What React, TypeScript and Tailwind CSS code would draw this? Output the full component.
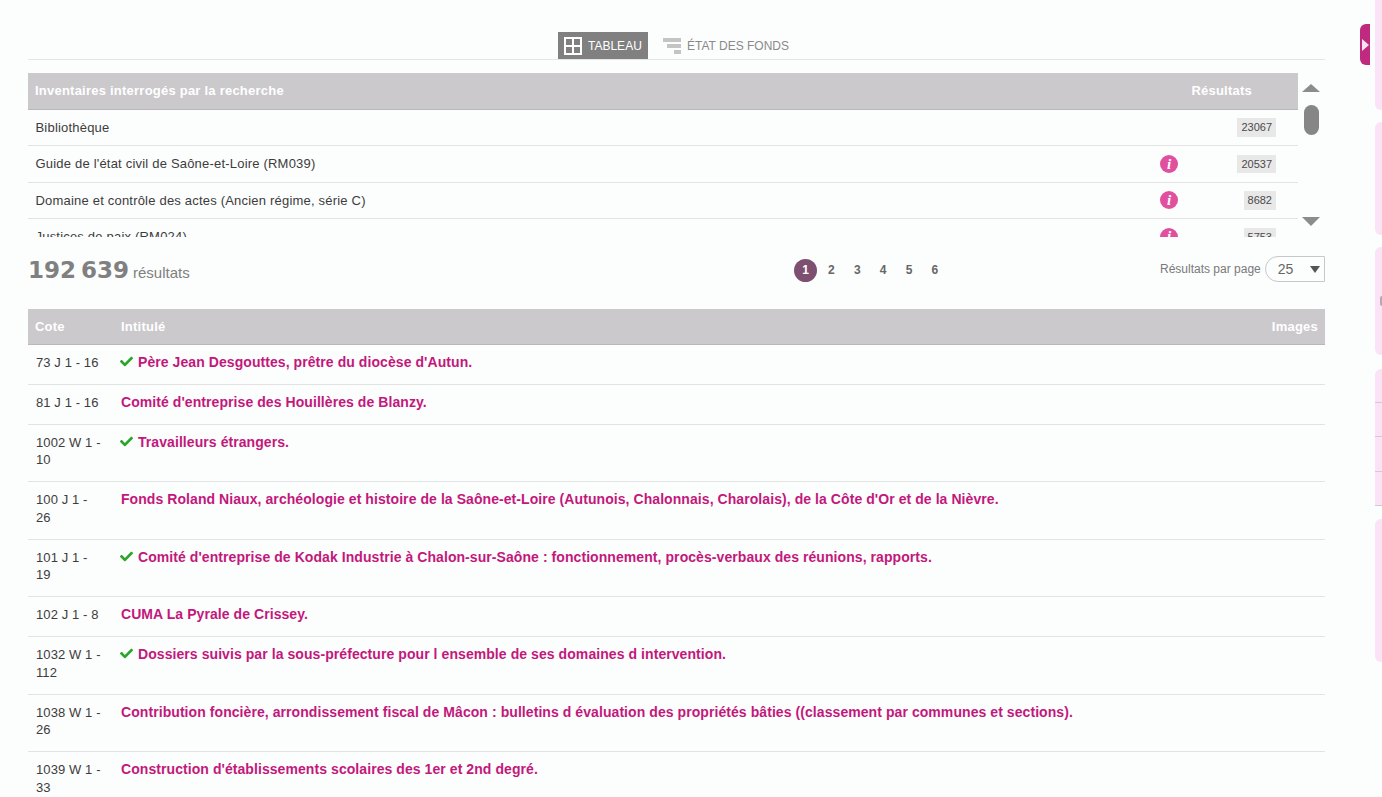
import { FaCheck } from 'react-icons/fa'

const inventories = [
  { name: 'Bibliothèque', count: '23067', info: false },
  { name: "Guide de l'état civil de Saône-et-Loire (RM039)", count: '20537', info: true },
  { name: 'Domaine et contrôle des actes (Ancien régime, série C)', count: '8682', info: true },
  { name: 'Justices de paix (RM024)', count: '5753', info: true },
]

const rows = [
  { cote: '73 J 1 - 16', title: "Père Jean Desgouttes, prêtre du diocèse d'Autun.", ok: true },
  { cote: '81 J 1 - 16', title: "Comité d'entreprise des Houillères de Blanzy.", ok: false },
  { cote: '1002 W 1 - 10', title: 'Travailleurs étrangers.', ok: true },
  {
    cote: '100 J 1 - 26',
    title:
      "Fonds Roland Niaux, archéologie et histoire de la Saône-et-Loire (Autunois, Chalonnais, Charolais), de la Côte d'Or et de la Nièvre.",
    ok: false,
  },
  {
    cote: '101 J 1 - 19',
    title:
      "Comité d'entreprise de Kodak Industrie à Chalon-sur-Saône : fonctionnement, procès-verbaux des réunions, rapports.",
    ok: true,
  },
  { cote: '102 J 1 - 8', title: 'CUMA La Pyrale de Crissey.', ok: false },
  {
    cote: '1032 W 1 - 112',
    title: 'Dossiers suivis par la sous-préfecture pour l ensemble de ses domaines d intervention.',
    ok: true,
  },
  {
    cote: '1038 W 1 - 26',
    title:
      'Contribution foncière, arrondissement fiscal de Mâcon : bulletins d évaluation des propriétés bâties ((classement par communes et sections).',
    ok: false,
  },
  { cote: '1039 W 1 - 33', title: "Construction d'établissements scolaires des 1er et 2nd degré.", ok: false },
]

function InfoIcon() {
  return (
    <span className="flex h-[18px] w-[18px] items-center justify-center rounded-full bg-[#e0509f] font-['Liberation_Serif',serif] text-[15px] font-bold italic leading-none text-white">
      i
    </span>
  )
}

function SidePanels() {
  return (
    <aside className="flex w-[7px] shrink-0 flex-col">
      <div className="h-[110px] rounded-bl-md bg-[#fae3f6]" />
      <div className="mt-[12px] h-[113px] rounded-l-md bg-[#fae3f6]" />
      <div className="mt-[12px] flex h-[108px] items-center justify-end rounded-l-md bg-[#fae3f6]">
        <span className="h-[10px] w-[2px] rounded-l-full bg-[#b5a9b2]" />
      </div>
      <div className="mt-[14px] h-[34px] rounded-tl-md border-b border-[#d9c7d5] bg-[#fae3f6]" />
      <div className="h-[34px] border-b border-[#d9c7d5] bg-[#fae3f6]" />
      <div className="h-[35px] border-b border-[#d9c7d5] bg-[#fae3f6]" />
      <div className="h-[34px] border-b border-[#d9c7d5] bg-[#fae3f6]" />
      <div className="mt-[13px] h-[143px] rounded-l-md bg-[#fae3f6]" />
    </aside>
  )
}

export default function App() {
  return (
    <div className="flex h-[797px] w-full overflow-hidden bg-[#fcfdfd] font-['Liberation_Sans',Arial,sans-serif]">
      <main className="ml-[28px] w-[1297px] shrink-0">
        <div className="mt-[32px] flex h-[28px] justify-center border-b border-[#e6e6e6] pr-[5px]">
          <div className="flex h-[27px] w-[90px] items-center bg-[#808080] pl-[6px] text-[12px] text-white">
            <svg width="18" height="18" viewBox="0 0 18 18" fill="none" stroke="white" strokeWidth="2" className="mr-[6px]">
              <rect x="1" y="1" width="16" height="16" />
              <path d="M9 1v16M1 9h16" />
            </svg>
            TABLEAU
          </div>
          <div className="flex h-[27px] w-[142px] items-center pl-[15px] text-[12px] text-[#8a8a8a]">
            <svg width="18" height="16" viewBox="0 0 18 16" fill="#c4c4c4" className="mr-[6px]">
              <rect x="0" y="0" width="18" height="4" />
              <rect x="4" y="6" width="14" height="4" />
              <rect x="11" y="12" width="7" height="4" />
            </svg>
            ÉTAT DES FONDS
          </div>
        </div>

        <div className="mt-[13px] flex">
          <div className="h-[164px] w-[1270px] overflow-hidden">
            <div className="flex h-[37px] items-center justify-between border-b border-[#b9b7ba] bg-[#cbc9cc] pl-[7px] pr-[46px] text-[13px] font-bold tracking-[0.23px] text-white">
              <span>Inventaires interrogés par la recherche</span>
              <span>Résultats</span>
            </div>
            {inventories.map((inv) => (
              <div key={inv.name} className="flex h-[36.4px] items-center border-b border-[#e3e3e3] pl-[7.5px] pr-[22px] text-[13px] text-[#3c3c3c]">
                <span className="flex-1 tracking-[0.2px]">{inv.name}</span>
                {inv.info && <InfoIcon />}
                <span className="flex w-[98px] justify-end">
                  <span className="bg-[#e8e8e8] px-[4px] py-[1px] text-[11px] text-[#4a4a4a]">{inv.count}</span>
                </span>
              </div>
            ))}
          </div>
          <div className="ml-[4px] flex h-[154px] w-[18px] flex-col items-center">
            <div className="mt-[11px] h-0 w-0 border-x-[9px] border-b-[8px] border-x-transparent border-b-[#8c8c8c]" />
            <div className="mt-[13px] h-[30px] w-[15px] rounded-[8px] bg-[#868686]" />
            <div className="mt-[82px] h-0 w-0 border-x-[9px] border-t-[9px] border-x-transparent border-t-[#8c8c8c]" />
          </div>
        </div>

        <div className="mt-[18px] flex h-[28px] items-center">
          <div className="flex w-[766px] items-baseline pt-[5px] text-[#808080]">
            <span className="font-['DejaVu_Sans',sans-serif] text-[23px] font-bold leading-none [word-spacing:-3px]">192 639</span>
            <span className="ml-[4px] text-[15px]">résultats</span>
          </div>
          <div className="flex w-[366px] items-center pt-[2px] text-[12px] font-bold text-[#666666]">
            <span className="flex h-[23px] w-[23px] items-center justify-center rounded-full bg-[#7d4f70] text-white">1</span>
            {['2', '3', '4', '5', '6'].map((n) => (
              <span key={n} className="ml-[2.9px] w-[23px] text-center">
                {n}
              </span>
            ))}
          </div>
          <span className="text-[12px] text-[#7a7a7a]">Résultats par page</span>
          <div className="ml-[4px] flex h-[26px] w-[60px] items-center justify-between rounded-l-[13px] border border-[#c8c8c8] pl-[12px] pr-[4px] text-[14px] text-[#666666]">
            25
            <span className="h-0 w-0 border-x-[5px] border-t-[7px] border-x-transparent border-t-[#555555]" />
          </div>
        </div>

        <div className="mt-[26px]">
          <div className="flex h-[35.7px] items-center justify-between border-b border-[#b9b7ba] bg-[#cbc9cc] px-[7px] text-[13px] font-bold tracking-[0.23px] text-white">
            <div className="flex">
              <span className="w-[86px]">Cote</span>
              <span>Intitulé</span>
            </div>
            <span>Images</span>
          </div>
          {rows.map((row) => (
            <div key={row.cote} className="flex border-b border-[#e3e3e3] pb-[12.5px] pt-[9px]">
              <div className="w-[93px] shrink-0 pl-[8px] pr-[18px] text-[13px] leading-[17.5px] tracking-[0.1px] text-[#3c3c3c]">{row.cote}</div>
              <div className="flex items-start text-[14px] font-bold leading-[17.5px] tracking-[0.07px] text-[#c2187c]">
                {row.ok && <FaCheck size={13} className="-ml-[1px] mr-[5px] mt-[1px] shrink-0 text-[#2aa52a]" />}
                <span>{row.title}</span>
              </div>
            </div>
          ))}
        </div>
      </main>

      <div className="ml-[35px] mt-[24px] flex h-[41px] w-[10px] shrink-0 items-center rounded-l-md bg-[#bf2a7f] pl-[2px]">
        <span className="h-0 w-0 border-y-[6px] border-l-[7px] border-y-transparent border-l-[#f9e3f3]" />
      </div>
      <div className="ml-[5px]">
        <SidePanels />
      </div>
    </div>
  )
}
